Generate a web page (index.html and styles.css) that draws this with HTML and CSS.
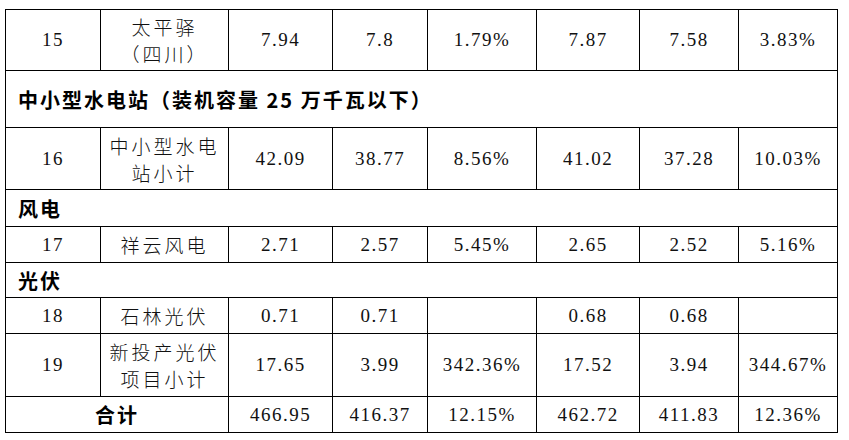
FILE: index.html
```html
<!DOCTYPE html>
<html lang="zh-CN">
<head>
<meta charset="utf-8">
<link rel="stylesheet" href="styles.css">
</head>
<body>
<div class="page">
<table class="grid">
  <colgroup>
    <col class="c1"><col class="c2"><col class="c3"><col class="c4">
    <col class="c5"><col class="c6"><col class="c7"><col class="c8">
  </colgroup>
  <tbody>
    <tr class="r-tall">
      <td class="num">15</td>
      <td class="name">太平驿<br>（四川）</td>
      <td class="num">7.94</td>
      <td class="num">7.8</td>
      <td class="num">1.79%</td>
      <td class="num">7.87</td>
      <td class="num">7.58</td>
      <td class="num">3.83%</td>
    </tr>
    <tr class="r-head-big">
      <td class="section" colspan="8">中小型水电站（装机容量 25 万千瓦以下）</td>
    </tr>
    <tr class="r-tall2">
      <td class="num">16</td>
      <td class="name">中小型水电<br>站小计</td>
      <td class="num">42.09</td>
      <td class="num">38.77</td>
      <td class="num">8.56%</td>
      <td class="num">41.02</td>
      <td class="num">37.28</td>
      <td class="num">10.03%</td>
    </tr>
    <tr class="r-head">
      <td class="section" colspan="8">风电</td>
    </tr>
    <tr class="r-one">
      <td class="num">17</td>
      <td class="name">祥云风电</td>
      <td class="num">2.71</td>
      <td class="num">2.57</td>
      <td class="num">5.45%</td>
      <td class="num">2.65</td>
      <td class="num">2.52</td>
      <td class="num">5.16%</td>
    </tr>
    <tr class="r-head2">
      <td class="section" colspan="8">光伏</td>
    </tr>
    <tr class="r-one">
      <td class="num">18</td>
      <td class="name">石林光伏</td>
      <td class="num">0.71</td>
      <td class="num">0.71</td>
      <td class="num"></td>
      <td class="num">0.68</td>
      <td class="num">0.68</td>
      <td class="num"></td>
    </tr>
    <tr class="r-tall3">
      <td class="num">19</td>
      <td class="name">新投产光伏<br>项目小计</td>
      <td class="num">17.65</td>
      <td class="num">3.99</td>
      <td class="num">342.36%</td>
      <td class="num">17.52</td>
      <td class="num">3.94</td>
      <td class="num">344.67%</td>
    </tr>
    <tr class="r-total">
      <td class="total" colspan="2">合计</td>
      <td class="num">466.95</td>
      <td class="num">416.37</td>
      <td class="num">12.15%</td>
      <td class="num">462.72</td>
      <td class="num">411.83</td>
      <td class="num">12.36%</td>
    </tr>
  </tbody>
</table>
</div>
</body>
</html>
```
FILE: styles.css
```css
html, body {
  margin: 0;
  padding: 0;
  background: #ffffff;
}
.page {
  padding: 9px 0 0 5px;
}
.grid {
  border-collapse: collapse;
  table-layout: fixed;
  width: 833px;
  color: #111;
}
.grid td {
  border: 1px solid #000;
  padding: 0;
  text-align: center;
  vertical-align: middle;
}
.c1 { width: 95px; }
.c2 { width: 128px; }
.c3 { width: 104px; }
.c4 { width: 95px; }
.c5 { width: 109px; }
.c6 { width: 103px; }
.c7 { width: 99px; }
.c8 { width: 99px; }

.r-tall td { height: 60px; }
.r-head-big td { height: 56px; }
.r-tall2 td { height: 61px; }
.r-head td { height: 36px; }
.r-one td { height: 35px; }
.r-head2 td { height: 34px; }
.r-tall3 td { height: 62px; }
.r-total td { height: 35px; }

.num {
  font-family: "Liberation Serif", serif;
  font-size: 19px;
  letter-spacing: 1.5px;
  color: #111;
}
.name {
  font-family: "Noto Sans CJK SC", sans-serif;
  font-weight: 300;
  font-size: 19px;
  letter-spacing: 3px;
  line-height: 27px;
  color: #111;
}
.section {
  text-align: left !important;
  padding-left: 12px !important;
  font-family: "Noto Sans CJK SC", sans-serif;
  font-weight: 700;
  font-size: 20px;
  letter-spacing: 2px;
  color: #000;
}
.total {
  font-family: "Noto Sans CJK SC", sans-serif;
  font-weight: 700;
  font-size: 20px;
  letter-spacing: 2px;
  color: #000;
}
```
